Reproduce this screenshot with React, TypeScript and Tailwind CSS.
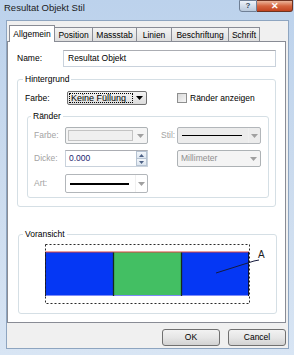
const tabs = [
  { label: "Position", w: "w-[39px]" },
  { label: "Massstab", w: "w-[45px]" },
  { label: "Linien", w: "w-[36px]" },
  { label: "Beschriftung", w: "w-[58px]" },
  { label: "Schrift", w: "w-[32px]" },
];

function Arrow({ color = "#000" }: { color?: string }) {
  return (
    <svg width="7" height="4" viewBox="0 0 7 4" className="shrink-0">
      <path d="M0 0 H7 L3.5 4 Z" fill={color} />
    </svg>
  );
}

function LineCombo({ thick, bg }: { thick: boolean; bg: string }) {
  return (
    <div
      className={`w-full h-full flex items-center border border-[#b2b6ba] rounded-[2px] ${bg}`}
    >
      <div className="flex-1 h-full flex items-center px-[4px] mr-[2px]">
        <div
          className={`w-full ${thick ? "h-[2px]" : "h-px"} bg-black`}
        />
      </div>
      <div className="w-[12px] h-full flex items-center justify-center border-l border-[#f0f0f0]">
        <Arrow color="#a0a0a0" />
      </div>
    </div>
  );
}

function GroupBox({
  label,
  legendLeft,
  className,
  children,
}: {
  label: string;
  legendLeft: string;
  className: string;
  children?: React.ReactNode;
}) {
  return (
    <div
      className={`relative border border-[#d5dfe5] rounded-[3px] flex flex-col ${className}`}
    >
      <span
        className={`absolute -top-[6px] ${legendLeft} bg-white px-[2px] leading-[10px]`}
      >
        {label}
      </span>
      {children}
    </div>
  );
}

export default function App() {
  return (
    <div className="w-[294px] h-[355px] overflow-hidden bg-gradient-to-b from-[#bcd2ec] via-[#cbdbee] to-[#d8e5f4] flex flex-col font-['Liberation_Sans',Arial,sans-serif] text-[8.5px] text-black">
      {/* Title bar */}
      <div className="h-[20px] flex items-start justify-between">
        <span className="pl-[4px] pt-[3px] text-[9.5px] leading-[10px] text-[#1b1b1b]">
          Resultat Objekt Stil
        </span>
        <div className="flex pr-[1px]">
          <div className="w-[18px] h-[12px] border border-[#6f7f95] rounded-bl-[3px] bg-gradient-to-b from-[#eef3fa] to-[#b9c9dc] flex items-center justify-center text-[8px] font-bold leading-none text-[#33465c]">
            ?
          </div>
          <div className="w-[36px] h-[12px] border border-l-0 border-[#6e3322] rounded-br-[3px] bg-gradient-to-b from-[#e9b49a] via-[#d5653f] to-[#c2431f] flex items-center justify-center text-white font-bold text-[9px] leading-none">
            ✕
          </div>
        </div>
      </div>

      {/* Client area */}
      <div className="ml-[6px] w-[283px] h-[329px] bg-[#f0f0f0] border border-[#8ea5c0] flex flex-col">
        {/* Tabs */}
        <div className="h-[20px] flex items-end pl-[2px]">
          <div className="relative z-10 -mb-px w-[46px] h-[17px] bg-white border border-b-0 border-[#898c95] flex items-start justify-center pt-[3px] leading-[10px]">
            Allgemein
          </div>
          {tabs.map((t, i) => (
            <div
              key={t.label}
              className={`${t.w} h-[14px] ${i === 0 ? "-ml-px" : "-ml-px"} border border-b-0 border-[#898c95] bg-gradient-to-b from-[#f3f3f3] to-[#dedede] flex items-center justify-center leading-[10px]`}
            >
              {t.label}
            </div>
          ))}
        </div>

        {/* Tab panel */}
        <div className="w-[279px] h-[282px] bg-white border border-[#898c95] flex flex-col">
          {/* Name */}
          <div className="mt-[8px] h-[17px] flex items-center pl-[9px]">
            <span className="w-[46px]">Name:</span>
            <div className="w-[213px] h-[17px] border border-[#c9d2dc] border-t-[#abadb3] flex items-center pl-[4px]">
              Resultat Objekt
            </div>
          </div>

          {/* Hintergrund */}
          <GroupBox
            label="Hintergrund"
            legendLeft="left-[5px]"
            className="mt-[12px] ml-[9px] w-[259px] h-[128px]"
          >
            <div className="mt-[11px] h-[14px] flex items-center pl-[7px]">
              <span className="w-[42px]">Farbe:</span>
              <div className="w-[80px] h-[14px] border border-[#707070] rounded-[2px] bg-gradient-to-b from-[#f4f4f4] to-[#dcdcdc] flex items-center pr-[3px]">
                <span className="flex-1 h-[10px] ml-[1px] mr-[3px] border border-dotted border-black flex items-center pl-[1px] text-[9px] leading-none">
                  Keine Füllung
                </span>
                <Arrow />
              </div>
              <div className="ml-[30px] w-[10px] h-[10px] border border-[#8e8f8f] bg-gradient-to-br from-[#d9d9d9] to-[#f6f6f6]" />
              <span className="ml-[3px]">Ränder anzeigen</span>
            </div>

            {/* Ränder */}
            <GroupBox
              label="Ränder"
              legendLeft="left-[3px]"
              className="mt-[11px] ml-[9px] w-[242px] h-[82px]"
            >
              <div className="mt-[10px] h-[17px] flex items-center pl-[6px]">
                <span className="w-[31px] text-[#a3a3a3]">Farbe:</span>
                <div className="w-[83px] h-[17px] border border-[#adb2b5] rounded-[2px] bg-[#f4f4f4] flex items-center pr-[3px]">
                  <div className="flex-1 h-[11px] ml-[2px] mr-[4px] border border-[#c3c3c3] bg-[#efefef]" />
                  <Arrow color="#a0a0a0" />
                </div>
                <span className="ml-[13px] w-[16px] text-[#a3a3a3]">Stil:</span>
                <div className="w-[84px] h-[17px]">
                  <LineCombo thick={false} bg="bg-[#ececec]" />
                </div>
              </div>

              <div className="mt-[6px] h-[17px] flex items-center pl-[6px]">
                <span className="w-[31px] text-[#a3a3a3]">Dicke:</span>
                <div className="w-[83px] h-[17px] border border-[#c9d2dc] border-t-[#abadb3] bg-white flex items-center">
                  <span className="flex-1 pl-[3px] text-[#1d1d6f]">0.000</span>
                  <div className="w-[11px] h-full flex flex-col">
                    <div className="flex-1 border border-[#b6c3d2] bg-gradient-to-b from-[#f3f7fb] to-[#dde6f0] flex items-center justify-center">
                      <svg width="5" height="3" viewBox="0 0 5 3">
                        <path d="M0 3 L2.5 0 L5 3 Z" fill="#4d6185" />
                      </svg>
                    </div>
                    <div className="flex-1 border border-t-0 border-[#b6c3d2] bg-gradient-to-b from-[#f3f7fb] to-[#dde6f0] flex items-center justify-center">
                      <svg width="5" height="3" viewBox="0 0 5 3">
                        <path d="M0 0 H5 L2.5 3 Z" fill="#4d6185" />
                      </svg>
                    </div>
                  </div>
                </div>
                <div className="ml-[29px] w-[84px] h-[17px] border border-[#adb2b5] rounded-[2px] bg-[#f4f4f4] flex items-center pl-[3px] pr-[3px]">
                  <span className="flex-1 text-[#8f8f8f]">Millimeter</span>
                  <Arrow color="#a0a0a0" />
                </div>
              </div>

              <div className="mt-[7px] h-[19px] flex items-center pl-[6px]">
                <span className="w-[31px] text-[#a3a3a3]">Art:</span>
                <div className="w-[83px] h-[19px]">
                  <LineCombo thick bg="bg-white" />
                </div>
              </div>
            </GroupBox>
          </GroupBox>

          {/* Voransicht */}
          <GroupBox
            label="Voransicht"
            legendLeft="left-[4px]"
            className="mt-[27px] ml-[10px] w-[259px] h-[80px]"
          >
            <svg
              width="240"
              height="66"
              viewBox="0 0 240 66"
              className="mt-[5px] ml-[11px]"
            >
              <rect x="15" y="12" width="204" height="44" fill="#0537f4" />
              <rect x="83" y="12" width="69" height="44" fill="#43bf63" />
              <line x1="15" y1="55.5" x2="219" y2="55.5" stroke="#7f8cf6" strokeWidth="1" />
              <line x1="15" y1="12" x2="219" y2="12" stroke="#d9433e" strokeWidth="1.2" />
              <line x1="15.5" y1="12" x2="15.5" y2="56" stroke="#10133a" strokeWidth="1" />
              <line x1="218.5" y1="12" x2="218.5" y2="56" stroke="#10133a" strokeWidth="1" />
              <line x1="83.5" y1="12.5" x2="83.5" y2="56" stroke="#142b1c" strokeWidth="1.3" />
              <line x1="151.5" y1="12.5" x2="151.5" y2="56" stroke="#142b1c" strokeWidth="1.3" />
              <rect
                x="15.5"
                y="4.5"
                width="204"
                height="59"
                fill="none"
                stroke="#2a2a2a"
                strokeWidth="1"
                strokeDasharray="2 2"
              />
              <line x1="186" y1="33" x2="224" y2="21" stroke="#151a3c" strokeWidth="1" />
              <line x1="224" y1="21" x2="229" y2="20" stroke="#151a3c" strokeWidth="1" />
              <text
                x="228"
                y="18"
                fontSize="10"
                fill="#1d1d1d"
                fontFamily="Liberation Sans, Arial, sans-serif"
              >
                A
              </text>
            </svg>
          </GroupBox>
        </div>

        {/* Buttons */}
        <div className="mt-[6px] flex justify-end gap-[8px] pr-[2px]">
          {["OK", "Cancel"].map((b) => (
            <div
              key={b}
              className="w-[58px] h-[17px] border border-[#707070] rounded-[3px] bg-gradient-to-b from-[#f2f2f2] via-[#e6e6e6] to-[#d2d2d2] flex items-center justify-center"
            >
              {b}
            </div>
          ))}
        </div>
      </div>
    </div>
  );
}
